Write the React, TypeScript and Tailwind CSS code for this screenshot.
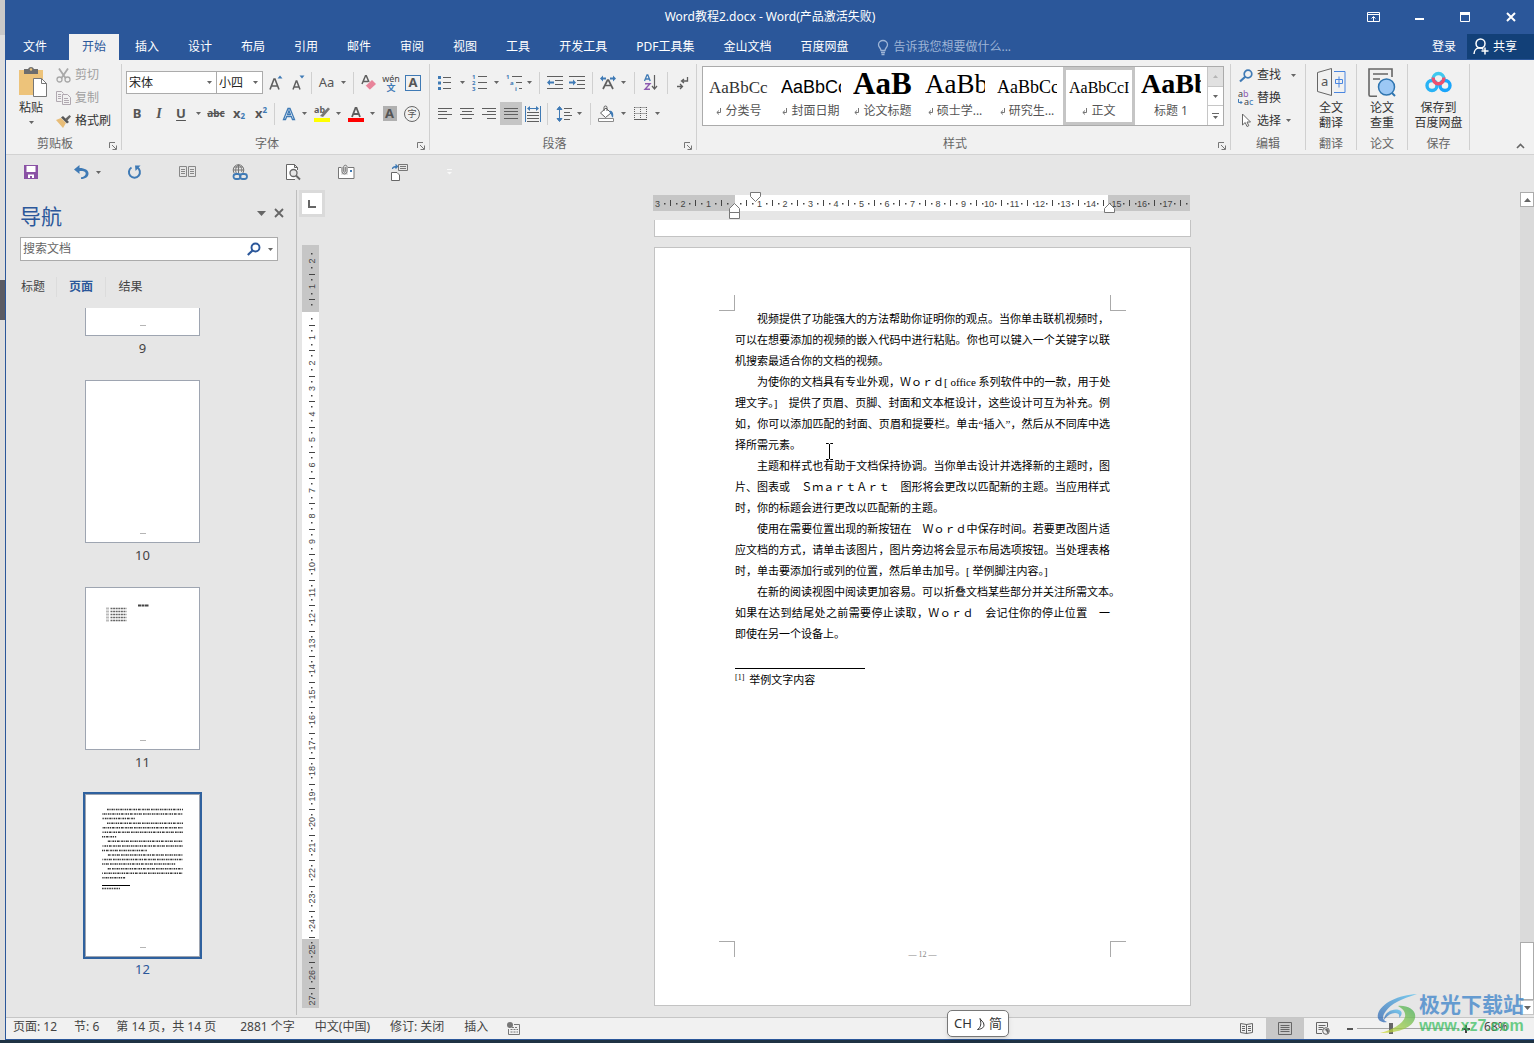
import type { ReactNode } from "react";
import clsx from "clsx";

const UI_FONT = "font-['Noto_Sans','Noto_Sans_CJK_SC',sans-serif]";
const DOC_FONT = "font-['Liberation_Serif','Noto_Sans_CJK_SC',serif]";

const BLUE = "#3f7ab5";
const GREY = "#5f5f5f";

const TABS = [
  "插入",
  "设计",
  "布局",
  "引用",
  "邮件",
  "审阅",
  "视图",
  "工具",
  "开发工具",
  "PDF工具集",
  "金山文档",
  "百度网盘",
];

interface StyleItem {
  sample: string;
  name: string;
  sampleClass: string;
  mark?: boolean;
  selected?: boolean;
}

const STYLES: StyleItem[] = [
  { sample: "AaBbCc", name: "分类号", sampleClass: "text-[17px] text-[#333]", mark: true },
  {
    sample: "AaBbCc",
    name: "封面日期",
    sampleClass: "text-[18px] font-['Liberation_Sans',sans-serif]",
    mark: true,
  },
  { sample: "AaB", name: "论文标题", sampleClass: "text-[31px] font-bold", mark: true },
  { sample: "AaBb", name: "硕士学...", sampleClass: "text-[27px]", mark: true },
  { sample: "AaBbCc", name: "研究生...", sampleClass: "text-[18px]", mark: true },
  { sample: "AaBbCcI", name: "正文", sampleClass: "text-[16px]", mark: true, selected: true },
  { sample: "AaBb", name: "标题 1", sampleClass: "text-[28px] font-bold" },
];

interface DocLine {
  text: string;
  indent?: boolean;
  full?: boolean;
}

const DOC_LINES: DocLine[] = [
  { text: "视频提供了功能强大的方法帮助你证明你的观点。当你单击联机视频时，", indent: true },
  { text: "可以在想要添加的视频的嵌入代码中进行粘贴。你也可以键入一个关键字以联", full: true },
  { text: "机搜索最适合你的文档的视频。" },
  {
    text: "为使你的文档具有专业外观，Ｗｏｒｄ[ office 系列软件中的一款，用于处",
    indent: true,
    full: true,
  },
  { text: "理文字。]　提供了页眉、页脚、封面和文本框设计，这些设计可互为补充。例", full: true },
  { text: "如，你可以添加匹配的封面、页眉和提要栏。单击“插入”，然后从不同库中选", full: true },
  { text: "择所需元素。" },
  {
    text: "主题和样式也有助于文档保持协调。当你单击设计并选择新的主题时，图",
    indent: true,
    full: true,
  },
  { text: "片、图表或　ＳｍａｒｔＡｒｔ　图形将会更改以匹配新的主题。当应用样式", full: true },
  { text: "时，你的标题会进行更改以匹配新的主题。" },
  {
    text: "使用在需要位置出现的新按钮在　Ｗｏｒｄ中保存时间。若要更改图片适",
    indent: true,
    full: true,
  },
  { text: "应文档的方式，请单击该图片，图片旁边将会显示布局选项按钮。当处理表格", full: true },
  { text: "时，单击要添加行或列的位置，然后单击加号。[ 举例脚注内容。]" },
  { text: "在新的阅读视图中阅读更加容易。可以折叠文档某些部分并关注所需文本。", indent: true },
  { text: "如果在达到结尾处之前需要停止读取，Ｗｏｒｄ　会记住你的停止位置　一", full: true },
  { text: "即使在另一个设备上。" },
];

/* ---------- small shared pieces ---------- */

interface SvgProps {
  w: number;
  h: number;
  children: ReactNode;
  className?: string;
}

function Svg({ w, h, children, className }: SvgProps) {
  return (
    <svg
      width={w}
      height={h}
      viewBox={`0 0 ${w} ${h}`}
      fill="none"
      aria-hidden="true"
      className={clsx("shrink-0 overflow-visible", className)}
    >
      {children}
    </svg>
  );
}

function Caret({ color = "#666" }: { color?: string }) {
  return (
    <Svg w={5} h={3}>
      <path d="M0 0h5L2.5 3z" fill={color} />
    </Svg>
  );
}

interface ToolProps {
  label: string;
  children: ReactNode;
  className?: string;
}

function Tool({ label, children, className = "w-[22px]" }: ToolProps) {
  return (
    <button
      type="button"
      aria-label={label}
      className={clsx("flex h-[23px] shrink-0 items-center justify-center", className)}
    >
      {children}
    </button>
  );
}

function Drop({ label, className = "w-[12px]" }: { label: string; className?: string }) {
  return (
    <Tool label={label} className={className}>
      <Caret />
    </Tool>
  );
}

function Rule({ className }: { className: string }) {
  return <span className={clsx("h-[22px] w-px shrink-0 bg-[#d0d0d0]", className)} />;
}

interface GroupProps {
  label: string;
  children: ReactNode;
  className: string;
  launcher?: boolean;
}

function Group({ label, children, className, launcher }: GroupProps) {
  return (
    <section
      aria-label={label}
      className={clsx("flex h-[86px] shrink-0 flex-col border-r border-[#d0d0d0]", className)}
    >
      <div className="h-[72px] shrink-0">{children}</div>
      <div className="flex h-4 shrink-0 items-center text-[#666]">
        <span className="flex-1 text-center leading-4">{label}</span>
        {launcher && (
          <button type="button" aria-label={`${label}设置`} className="flex w-[17px] justify-center pt-1">
            <Svg w={8} h={8}>
              <path d="M.5 6V.5H6M3 3l4 4M7.5 3.500V7.500H3.500" stroke="#777" />
            </Svg>
          </button>
        )}
      </div>
    </section>
  );
}

function Lines({ rows, x = 0 }: { rows: [number, number, number][]; x?: number }) {
  return (
    <>
      {rows.map(([y, from, to]) => (
        <path key={y} d={`M${x + from} ${y + 0.5}H${x + to}`} stroke={GREY} />
      ))}
    </>
  );
}

/* ---------- title and tabs ---------- */

function TitleBar() {
  return (
    <header className="flex h-[34px] items-center bg-[#2b579a] text-white">
      <span className="w-[184px]" />
      <h1 className="flex-1 text-center text-[12px] leading-5">Word教程2.docx - Word(产品激活失败)</h1>
      <div className="flex w-[184px] justify-end">
        <button type="button" aria-label="功能区显示选项" className="flex w-[46px] items-center justify-center">
          <Svg w={13} h={11}>
            <path d="M.5.500h12v9H.5zM.5 2.500h12M6.500 9V5M4.500 6.500l2-2 2 2" stroke="#fff" />
          </Svg>
        </button>
        <button type="button" aria-label="最小化" className="flex w-[46px] items-center justify-center">
          <Svg w={9} h={11}>
            <path d="M0 7h9" stroke="#fff" strokeWidth="2" />
          </Svg>
        </button>
        <button type="button" aria-label="最大化" className="flex w-[46px] items-center justify-center">
          <Svg w={10} h={10}>
            <path d="M.5 1v8.500h9V1" stroke="#fff" />
            <path d="M0 1.500h10" stroke="#fff" strokeWidth="3" />
          </Svg>
        </button>
        <button type="button" aria-label="关闭" className="flex w-[46px] items-center justify-center">
          <Svg w={10} h={10}>
            <path d="M1 1l8 8M9 1L1 9" stroke="#fff" strokeWidth="2" />
          </Svg>
        </button>
      </div>
    </header>
  );
}

function TabBar() {
  return (
    <nav className="flex h-[26px] items-stretch gap-[3px] bg-[#2b579a] text-white">
      <button type="button" className="mr-[2px] w-[58px]">
        文件
      </button>
      <button type="button" className="w-[50px] bg-[#f1f1f1] text-[#2b579a]">
        开始
      </button>
      {TABS.map((tab) => (
        <button key={tab} type="button" className="px-[13px] whitespace-nowrap">
          {tab}
        </button>
      ))}
      <label className="flex flex-1 items-center gap-1 pl-[13px]">
        <Svg w={12} h={15}>
          <path
            d="M4 10.500C4 8 1.500 7.500 1.500 4.800a4.500 4.300 0 0 1 9 0C10.500 7.500 8 8 8 10.500zM4 12.500h4M4.500 14.500h3"
            stroke="#9db4d6"
            strokeWidth="1.300"
          />
        </Svg>
        <input
          aria-label="告诉我您想要做什么"
          placeholder="告诉我您想要做什么..."
          className="w-full min-w-0 bg-transparent placeholder:text-[#9db4d6]"
        />
      </label>
      <button type="button" className="px-2">
        登录
      </button>
      <button type="button" className="mb-px flex w-[67px] items-center gap-1 bg-[#124078] pl-[6px]">
        <Svg w={16} h={17}>
          <circle cx="7.500" cy="5.500" r="4.500" stroke="#fff" strokeWidth="1.500" />
          <path d="M1 16c0-3.500 2.500-6 5.500-6.200 1.500 0 3 .7 4 1.700M12 9.500v7M8.500 13H15.500" stroke="#fff" strokeWidth="1.500" />
        </Svg>
        共享
      </button>
    </nav>
  );
}

/* ---------- ribbon ---------- */

function ClipboardGroup() {
  return (
    <Group label="剪贴板" launcher className="w-[116px]">
      <div className="flex">
        <button type="button" className="flex w-[50px] flex-col items-center">
          <span className="flex h-9 items-center pl-1">
            <Svg w={28} h={30}>
              <path d="M0 3h24v25H0z" fill="#edc37a" />
              <path d="M5 7V2h4a3.200 3.200 0 0 1 6 0h4v5z" fill="#6d6d6d" />
              <circle cx="12" cy="2.500" r="1.200" fill="#edc37a" />
              <path d="M14.500 11.500h8l5 5v13h-13z" fill="#fff" stroke="#777" />
              <path d="M22.500 11.500v5h5" stroke="#777" />
            </Svg>
          </span>
          <span className="leading-[15px]">粘贴</span>
          <span className="flex h-[14px] items-center">
            <Caret />
          </span>
        </button>
        <div className="flex flex-col">
          <button type="button" className="flex h-[22px] items-center gap-1 text-[#a0a0a0]">
            <Svg w={15} h={15}>
              <path d="M3 .5l6.500 9.500M12 .5L5.500 10" stroke="#a8a8a8" strokeWidth="1.800" />
              <circle cx="3.500" cy="11.500" r="2.500" stroke="#a8a8a8" strokeWidth="1.300" />
              <circle cx="11.500" cy="11.500" r="2.500" stroke="#a8a8a8" strokeWidth="1.300" />
            </Svg>
            剪切
          </button>
          <button type="button" className="flex h-[23px] items-center gap-1 text-[#a0a0a0]">
            <Svg w={15} h={14}>
              <path d="M5.500 10.500h-5V.5h5l2 2M2 3.500h3M2 5.500h3M2 7.500h3" stroke="#b0a8b0" />
              <path d="M6.500 3.500h5l3 3v7h-8zM8 7.500h4M8 9.500h5M8 11.500h5" stroke="#b0a8b0" />
            </Svg>
            复制
          </button>
          <button type="button" className="flex h-[23px] items-center gap-1 text-[#333]">
            <Svg w={15} h={14}>
              <path d="M0 6l5-2 5 5-3 5z" fill="#e8bd78" />
              <path d="M5 3.500l2-1.500 6 6-2 1.500z" fill="#555" />
              <path d="M9 5l4.500-4L15 2.500 11 7z" fill="#666" />
            </Svg>
            格式刷
          </button>
        </div>
      </div>
    </Group>
  );
}

function FontGroup() {
  return (
    <Group label="字体" launcher className="w-[308px]">
      <div className="flex flex-col gap-2 pt-[7px] pl-1">
        <div className="flex items-center">
          <label className="flex h-[23px] w-[91px] items-center border border-[#ababab] bg-white pr-1">
            <select aria-label="字体名称" className="w-full min-w-0 appearance-none pl-[2px] text-[#222]">
              <option>宋体</option>
            </select>
            <Caret />
          </label>
          <label className="-ml-px flex h-[23px] w-[47px] items-center border border-[#ababab] bg-white pr-1">
            <select aria-label="字号" className="w-full min-w-0 appearance-none pl-[2px] text-[#222]">
              <option>小四</option>
            </select>
            <Caret />
          </label>
          <Tool label="增大字号" className="ml-[2px] w-[22px]">
            <Svg w={14} h={16}>
              <path d="M1 14.500L5 4h1l4 10.500M2.500 11h6" stroke={GREY} strokeWidth="1.600" />
              <path d="M8.500 3.500L11 .5l2.500 3z" fill={BLUE} />
            </Svg>
          </Tool>
          <Tool label="减小字号">
            <Svg w={14} h={16}>
              <path d="M2 14.500L5.200 6h.6L9 14.500M3 12h5" stroke={GREY} strokeWidth="1.500" />
              <path d="M8.500.5L11 3.500l2.500-3z" fill={BLUE} />
            </Svg>
          </Tool>
          <Rule className="mx-[2px]" />
          <Tool label="更改大小写" className="w-[37px] gap-[7px] text-[13px] text-[#555]">
            Aa
            <Caret />
          </Tool>
          <Rule className="mr-[4px] ml-[2px]" />
          <Tool label="清除所有格式">
            <Svg w={16} h={16}>
              <path d="M1 9L4.500.8h.8L8 7M2 6.500h5" stroke={GREY} strokeWidth="1.500" />
              <path d="M4.500 11L11 5l4 4-6.500 6z" fill="#e8849a" />
              <path d="M4.500 11l4 4" stroke="#fff" />
            </Svg>
          </Tool>
          <Tool label="拼音指南" className="w-[22px] flex-col">
            <span className="text-[9px] leading-[9px] text-[#444]">wén</span>
            <span className="text-[9px] leading-[9px] font-bold text-[#3f7ab5]">文</span>
          </Tool>
          <Tool label="字符边框">
            <span className="flex size-4 items-center justify-center border border-[#3f7ab5] text-[13px] leading-none font-bold text-[#555]">
              A
            </span>
          </Tool>
        </div>
        <div className="flex items-center text-[13px] text-[#555]">
          <Tool label="加粗">
            <b>B</b>
          </Tool>
          <Tool label="倾斜">
            <i className="font-['Liberation_Serif',serif] text-[14px] font-bold">I</i>
          </Tool>
          <Tool label="下划线">
            <b className="underline underline-offset-2">U</b>
          </Tool>
          <Drop label="下划线样式" />
          <Tool label="删除线" className="w-[24px] text-[10px] font-bold">
            <s>abc</s>
          </Tool>
          <Tool label="下标" className="w-[22px] font-bold">
            x<sub className="text-[8px] text-[#3f7ab5]">2</sub>
          </Tool>
          <Tool label="上标" className="w-[22px] font-bold">
            x<sup className="text-[8px] text-[#3f7ab5]">2</sup>
          </Tool>
          <Rule className="mr-[4px] ml-[2px]" />
          <Tool label="文本效果" className="w-[20px]">
            <Svg w={14} h={14}>
              <path
                d="M1.500 12.500L6 1.500h2l4.500 11h-2l-1.200-3H4.700l-1.200 3zM5.500 7.500h3L7 3.500z"
                fill="#fff"
                stroke={BLUE}
                strokeWidth="1.300"
              />
            </Svg>
          </Tool>
          <Drop label="文本效果选项" className="w-[10px]" />
          <Tool label="突出显示颜色" className="ml-[2px] w-[22px]">
            <Svg w={17} h={17}>
              <text x="0" y="8" fontSize="9" fontWeight="700" fill={GREY}>
                ab
              </text>
              <path d="M6 11l8-8.500 2 1.500-7 8z" fill="#777" />
              <path d="M0 13h16v4H0z" fill="#ff0" />
            </Svg>
          </Tool>
          <Drop label="突出显示颜色选项" className="w-[10px]" />
          <Tool label="字体颜色" className="ml-[2px] w-[22px]">
            <Svg w={16} h={16}>
              <path d="M4 11L7.500 2h1L12 11M5 8h6" stroke={GREY} strokeWidth="1.800" />
              <path d="M0 12h16v4H0z" fill="#f00" />
            </Svg>
          </Tool>
          <Drop label="字体颜色选项" className="w-[11px]" />
          <Tool label="字符底纹" className="w-[23px]">
            <span className="flex h-[15px] w-[14px] items-center justify-center bg-[#b0b0b0] leading-none font-bold">
              A
            </span>
          </Tool>
          <Tool label="带圈字符">
            <span className="flex size-4 items-center justify-center rounded-full border border-[#666] text-[9px]">
              字
            </span>
          </Tool>
        </div>
      </div>
    </Group>
  );
}

function ParagraphGroup() {
  return (
    <Group label="段落" launcher className="w-[267px]">
      <div className="flex flex-col gap-2 pt-[7px] pl-1">
        <div className="flex items-center">
          <Tool label="项目符号">
            <Svg w={14} h={16}>
              <path d="M0 1h3v3H0zM0 6.500h3v3H0zM0 12h3v3H0z" fill={BLUE} />
              <Lines rows={[[2, 5, 13], [7, 5, 13], [13, 5, 13]]} />
            </Svg>
          </Tool>
          <Drop label="项目符号库" />
          <Tool label="编号">
            <Svg w={15} h={17}>
              {["1", "2", "3"].map((n, i) => (
                <text key={n} x="0" y={5 + i * 6} fontSize="6" fontWeight="700" fill={BLUE}>
                  {n}
                </text>
              ))}
              <Lines rows={[[2, 6, 15], [8, 6, 15], [14, 6, 15]]} />
            </Svg>
          </Tool>
          <Drop label="编号库" />
          <Tool label="多级列表" className="w-[24px]">
            <Svg w={17} h={17}>
              <text x="0" y="5" fontSize="6" fontWeight="700" fill={BLUE}>1</text>
              <text x="4" y="11" fontSize="6" fontWeight="700" fill={BLUE}>a</text>
              <text x="9" y="17" fontSize="6" fontWeight="700" fill={BLUE}>i</text>
              <Lines rows={[[2, 6, 16], [8, 10, 16], [14, 13, 16]]} />
            </Svg>
          </Tool>
          <Drop label="多级列表库" className="w-[6px]" />
          <Rule className="mr-[4px] ml-[7px]" />
          <Tool label="减少缩进量">
            <Svg w={16} h={14}>
              <Lines rows={[[0, 0, 16], [4, 8, 16], [8, 8, 16], [12, 0, 16]]} />
              <path d="M0 6.500l3-3v2h4v2H3v2z" fill={BLUE} />
            </Svg>
          </Tool>
          <Tool label="增加缩进量">
            <Svg w={16} h={14}>
              <Lines rows={[[0, 0, 16], [4, 8, 16], [8, 8, 16], [12, 0, 16]]} />
              <path d="M7 6.500l-3-3v2H0v2h4v2z" fill={BLUE} />
            </Svg>
          </Tool>
          <Rule className="mx-1" />
          <Tool label="中文版式">
            <Svg w={16} h={15}>
              <path d="M0 3.500L3 .5v2h3v2H3v2zM16 3.500L13 .5v2h-3v2h3v2z" fill={BLUE} />
              <path d="M3 14L7.500 5h1L13 14M5 10.500h6" stroke={GREY} strokeWidth="1.700" />
            </Svg>
          </Tool>
          <Drop label="中文版式选项" className="w-[8px]" />
          <Rule className="mr-[5px] ml-[7px]" />
          <Tool label="排序">
            <Svg w={14} h={17}>
              <path d="M.5 7L3 .8h.8L6.200 7M1.500 5h4" stroke={BLUE} strokeWidth="1.300" />
              <path d="M1 9.700h5L1 15.300h5" stroke="#8d5bb0" strokeWidth="1.400" />
              <path d="M10.500 1v14M8 12l2.500 3 2.500-3" stroke={GREY} strokeWidth="1.200" />
            </Svg>
          </Tool>
          <Rule className="mr-[4px] ml-[5px]" />
          <Tool label="显示编辑标记">
            <Svg w={12} h={14}>
              <path d="M10.500 1v4H5M7 3L4.500 5 7 7" stroke={GREY} strokeWidth="1.300" />
              <path d="M0 10.500h5M3 8l2.500 2.500L3 13" stroke={GREY} strokeWidth="1.300" />
            </Svg>
          </Tool>
        </div>
        <div className="flex items-center">
          <Tool label="左对齐">
            <Svg w={14} h={11}>
              <Lines rows={[[0, 0, 14], [3, 0, 9], [6, 0, 14], [10, 0, 9]]} />
            </Svg>
          </Tool>
          <Tool label="居中">
            <Svg w={14} h={11}>
              <Lines rows={[[0, 0, 14], [3, 2, 12], [6, 0, 14], [10, 2, 12]]} />
            </Svg>
          </Tool>
          <Tool label="右对齐">
            <Svg w={14} h={11}>
              <Lines rows={[[0, 0, 14], [3, 5, 14], [6, 0, 14], [10, 5, 14]]} />
            </Svg>
          </Tool>
          <Tool label="两端对齐" className="w-[22px] bg-[#c5c5c5]">
            <Svg w={14} h={11}>
              <Lines rows={[[0, 0, 14], [3, 0, 14], [6, 0, 14], [10, 0, 14]]} />
            </Svg>
          </Tool>
          <Tool label="分散对齐">
            <Svg w={16} h={16}>
              <path d="M.5 0v16M15.500 0v16" stroke={BLUE} />
              <path d="M2 2.500L5 0v2h6V0l3 2.500L11 5V3H5v2z" fill={BLUE} />
              <Lines rows={[[6, 2, 14], [9, 2, 14], [12, 2, 14], [15, 2, 14]]} />
            </Svg>
          </Tool>
          <Rule className="mr-[5px] ml-[3px]" />
          <Tool label="行和段落间距">
            <Svg w={15} h={16}>
              <path d="M2.500 2v12M0 3.500L2.500.5 5 3.500zM0 12.500l2.500 3 2.500-3z" stroke={BLUE} fill={BLUE} />
              <Lines rows={[[2, 7, 15], [6, 7, 13], [9, 7, 15], [13, 7, 13]]} />
            </Svg>
          </Tool>
          <Drop label="行距选项" className="w-[8px]" />
          <Rule className="mr-[4px] ml-[7px]" />
          <Tool label="底纹">
            <Svg w={17} h={16}>
              <path d="M2.500 7L8 2l5 5-5.500 4.500z" fill="#fff" stroke={GREY} />
              <path d="M6 5V1.500a1.500 1.500 0 0 1 3 0V5" stroke={GREY} />
              <path d="M11.500 4.500c3 0 4.500 3 3.500 7-2-.5-1-3-3-4z" fill={BLUE} />
              <path d="M.5 12.500h15v3H.5z" fill="#fff" stroke="#8a8a8a" />
            </Svg>
          </Tool>
          <Drop label="底纹颜色" className="w-[12px]" />
          <Tool label="边框">
            <Svg w={13} h={13}>
              <path d="M.5.500h12M.5 6.500h12M.5 0v12M6.500 0v12M12.500 0v12" stroke={GREY} strokeDasharray="1 1" />
              <path d="M0 12.500h13" stroke={GREY} />
            </Svg>
          </Tool>
          <Drop label="边框选项" className="w-[12px]" />
        </div>
      </div>
    </Group>
  );
}

function StyleGallery() {
  return (
    <Group label="样式" launcher className="w-[534px]">
      <div className="pt-[2px] pl-[5px]">
        <div className="flex h-[60px] w-[522px] border border-[#ababab] bg-white">
          {STYLES.map((item) => (
            <button
              key={item.name}
              type="button"
              aria-pressed={!!item.selected}
              className={clsx(
                "flex w-[72px] shrink-0 flex-col items-center border-[3px]",
                item.selected ? "border-[#c5c5c5]" : "border-transparent",
              )}
            >
              <span className="h-[33px] w-[60px] overflow-hidden text-left font-['Liberation_Serif',serif] text-[28px] leading-[28px] whitespace-nowrap text-black">
                <span className={item.sampleClass}>{item.sample}</span>
              </span>
              <span className="flex items-center gap-1 leading-4 whitespace-nowrap text-[#555]">
                {item.mark && (
                  <Svg w={5} h={7}>
                    <path d="M4.500 0v4.500H1M3 2.500L.8 4.500 3 6.500" stroke="#777" />
                  </Svg>
                )}
                {item.name}
              </span>
            </button>
          ))}
          <div className="flex flex-1 flex-col border-l border-[#c6c6c6]">
            <button type="button" aria-label="上一行" className="flex flex-1 items-center justify-center bg-[#e1e1e1]">
              <Svg w={5} h={3}>
                <path d="M0 3h5L2.500 0z" fill="#b5b5b5" />
              </Svg>
            </button>
            <button
              type="button"
              aria-label="下一行"
              className="flex flex-1 items-center justify-center border-y border-[#c6c6c6]"
            >
              <Caret />
            </button>
            <button type="button" aria-label="其他样式" className="flex flex-1 items-center justify-center">
              <Svg w={7} h={6}>
                <path d="M0 .5h7" stroke="#666" />
                <path d="M1 3h5L3.500 6z" fill="#666" />
              </Svg>
            </button>
          </div>
        </div>
      </div>
    </Group>
  );
}

function EditGroup() {
  return (
    <Group label="编辑" className="w-[75px]">
      <div className="flex flex-col items-start pl-2 text-[#333]">
        <button type="button" className="flex h-[22px] items-center">
          <Svg w={14} h={13} className="mr-1">
            <circle cx="9" cy="5" r="3.800" stroke={BLUE} strokeWidth="1.700" />
            <path d="M6.500 7.500L1 12.500" stroke={BLUE} strokeWidth="2.200" />
          </Svg>
          查找
          <span className="pl-[10px]">
            <Caret />
          </span>
        </button>
        <button type="button" className="-ml-px flex h-[23px] items-center">
          <Svg w={16} h={16} className="mr-[3px]">
            <text x="0" y="7" fontSize="9" fill="#444">
              a<tspan fill="#8d5bb0">b</tspan>
            </text>
            <text x="6" y="15" fontSize="9" fill="#444">
              a<tspan fill={BLUE}>c</tspan>
            </text>
            <path d="M.5 9v3.500H4M2.500 11L4 12.500 2.500 14" stroke={BLUE} />
          </Svg>
          替换
        </button>
        <button type="button" className="flex h-[23px] items-center">
          <Svg w={12} h={15} className="mr-1 ml-[2px]">
            <path d="M1.500 1v11l2.700-2.500L6 13.500l1.800-.8L6 9h3.500z" fill="#fff" stroke="#666" />
          </Svg>
          选择
          <span className="pl-[5px]">
            <Caret />
          </span>
        </button>
      </div>
    </Group>
  );
}

interface BigButtonProps {
  icon: ReactNode;
  lines: [string, string];
}

function BigButton({ icon, lines }: BigButtonProps) {
  return (
    <button type="button" className="flex w-full flex-col items-center whitespace-nowrap text-[#333]">
      <span className="flex h-9 items-center">{icon}</span>
      <span className="leading-[15px]">{lines[0]}</span>
      <span className="leading-[15px]">{lines[1]}</span>
    </button>
  );
}

function Ribbon() {
  return (
    <div className="flex h-[95px] border-b border-[#d2d2d2] bg-[#f1f1f1] pt-1">
      <ClipboardGroup />
      <FontGroup />
      <ParagraphGroup />
      <StyleGallery />
      <EditGroup />
      <Group label="翻译" className="w-[51px]">
        <BigButton
          lines={["全文", "翻译"]}
          icon={
            <Svg w={29} h={28}>
              <path d="M.5 4.500l14-4v27l-14-4z" stroke="#666" />
              <text x="4" y="18" fontSize="13" fill="#555">
                a
              </text>
              <path d="M17 3.500h11v21H17" stroke="#4a86e0" />
              <path d="M18.500 11.500h7v4h-7zM22 8.500v11" stroke="#4a86e0" />
            </Svg>
          }
        />
      </Group>
      <Group label="论文" className="w-[51px]">
        <BigButton
          lines={["论文", "查重"]}
          icon={
            <Svg w={28} h={29}>
              <path d="M9 28.300H2.500a1.500 1.500 0 0 1-1.500-1.500V1h23v8" stroke="#666" strokeWidth="1.600" />
              <path d="M5 6h15M5 11h7" stroke="#666" strokeWidth="1.600" />
              <path d="M23 24l4 4" stroke="#2f75b0" strokeWidth="2" />
              <circle cx="18.500" cy="19" r="8" fill="#9cc8f5" stroke="#2f75b0" strokeWidth="1.500" />
            </Svg>
          }
        />
      </Group>
      <Group label="保存" className="w-[62px]">
        <BigButton
          lines={["保存到", "百度网盘"]}
          icon={
            <Svg w={27} h={22}>
              <circle cx="7" cy="14.500" r="5" stroke="#29b3f5" strokeWidth="3.400" />
              <circle cx="20" cy="14.500" r="5" stroke="#1aa5fb" strokeWidth="3.400" />
              <path d="M8 8a5.500 5.500 0 0 1 11 0" stroke="#3fc8ee" strokeWidth="3.400" />
              <path d="M8.300 6.500a5.300 5.300 0 1 0 10.400 0" stroke="#f0506e" strokeWidth="3.400" />
            </Svg>
          }
        />
      </Group>
      <div className="flex flex-1 items-end justify-end pr-2 pb-1">
        <button type="button" aria-label="折叠功能区" className="p-[1px]">
          <Svg w={9} h={6}>
            <path d="M1 5l3.500-3.500L8 5" stroke="#666" strokeWidth="1.600" />
          </Svg>
        </button>
      </div>
    </div>
  );
}

function QuickBar() {
  return (
    <div className="flex h-[35px] items-center bg-[#e6e6e6] pb-px pl-[11px]">
      <Tool label="保存" className="w-[28px]">
        <Svg w={14} h={14}>
          <path d="M0 0h14v14H0z" fill="#8a52a5" />
          <path d="M2.500 1h9v6h-9zM4 9.500h6V13H8v-2H6v2H4z" fill="#fff" />
        </Svg>
      </Tool>
      <Tool label="撤消" className="ml-[22px] w-[28px]">
        <Svg w={15} h={14}>
          <path d="M5.500 0L0 4.500 5.500 9V6C10 5.500 12.500 7 11.500 9.500 11 11 9.500 12 7 12.200V14c4.500 0 7.500-2.300 7.500-5.500S11 3 5.500 3z" fill={BLUE} />
        </Svg>
      </Tool>
      <Drop label="撤消历史" className="w-[6px]" />
      <Tool label="重复" className="ml-[19px] w-[28px]">
        <Svg w={14} h={14}>
          <path d="M4.500 2.500A5.500 5.500 0 1 0 10 2.300" stroke={BLUE} strokeWidth="2" />
          <path d="M8 .5h5.500L8.500 6z" fill={BLUE} />
        </Svg>
      </Tool>
      <Tool label="阅读视图" className="ml-[25px] w-[28px]">
        <Svg w={17} h={12}>
          <path d="M.5.500h7v10h-7zM9.500.500h7v10h-7z" stroke="#888" />
          <path d="M2 3.500h4M2 5.500h4M2 7.500h4M11 3.500h4M11 5.500h4M11 7.500h4" stroke="#888" />
        </Svg>
      </Tool>
      <Tool label="超链接" className="ml-[25px] w-[28px]">
        <Svg w={16} h={17}>
          <circle cx="6.500" cy="6" r="5.300" stroke="#777" />
          <path d="M1 6h11M2 3h9M6.500 1v9M6.500.700C3 3 3 8 5 10M6.500.700C10 3 10 6 9.500 8" stroke="#777" />
          <path d="M1 9h15v7H1z" fill="#e6e6e6" />
          <rect x="1.500" y="10" width="7" height="5" rx="2.500" stroke={BLUE} strokeWidth="1.800" />
          <rect x="8" y="10" width="7" height="5" rx="2.500" stroke={BLUE} strokeWidth="1.800" />
        </Svg>
      </Tool>
      <Tool label="打印预览" className="ml-[25px] w-[28px]">
        <Svg w={15} h={16}>
          <path d="M9 15.500H.5V.5h8l3 3V6M8.500.5v3h3" fill="#fff" stroke="#666" />
          <circle cx="7.500" cy="9" r="3.500" fill="#e6e6e6" stroke="#666" strokeWidth="1.300" />
          <path d="M10 11.500l4 4" stroke="#666" strokeWidth="1.800" />
        </Svg>
      </Tool>
      <Tool label="邮件附件" className="ml-[25px] w-[28px]">
        <Svg w={17} h={16}>
          <path d="M.5 3.500h15.500v11H.5z" fill="#fff" stroke="#777" />
          <path d="M3 0h7v11H3z" fill="#e6e6e6" />
          <path d="M4 3v4.500a2.500 2.500 0 0 0 5 0V2.500a1.700 1.700 0 0 0-3.300 0V7.500a.8.8 0 0 0 1.600 0V3" stroke="#777" />
          <path d="M12 6h2v2h-2z" fill={BLUE} />
        </Svg>
      </Tool>
      <Tool label="插入对象" className="ml-[25px] w-[28px]">
        <Svg w={17} h={17}>
          <path d="M7.500.5h9v6h-9zM9 2.500h6M9 4.500h6" stroke="#777" />
          <path d="M6 16.500H.5v-8H6l2.500 2.500v5.500z" fill="#fff" stroke="#666" />
          <path d="M1.500 5C1.500 3 3 2.500 6 2.500M4.500.5l2 2-2 2" stroke={BLUE} strokeWidth="1.300" />
        </Svg>
      </Tool>
      <Tool label="自定义快速访问工具栏" className="ml-[22px] w-[28px]">
        <Svg w={5} h={6}>
          <path d="M0 .5h5" stroke="#fafafa" />
          <path d="M0 3h5L2.500 5.500z" fill="#fafafa" />
        </Svg>
      </Tool>
    </div>
  );
}

/* ---------- navigation pane ---------- */

function ThumbNine() {
  return (
    <div className="flex h-7 w-[115px] flex-col items-center justify-end border border-t-0 border-[#9ea5b1] bg-white pb-[9px]">
      <span className="h-px w-[6px] bg-[#b5b5b5]" />
    </div>
  );
}

function ThumbTen() {
  return (
    <Svg w={113} h={161}>
      <path d="M54 152.500h6" stroke="#b5b5b5" />
    </Svg>
  );
}

function ThumbEleven() {
  return (
    <Svg w={113} h={161}>
      <path d="M52 17.500h11" stroke="#444" strokeWidth="2" strokeDasharray="3 .5" />
      {[20.5, 23.5, 26.5, 29.5, 32.5].map((y) => (
        <g key={y}>
          <path d={`M20 ${y}h3`} stroke="#bbb" strokeWidth="2" />
          <path d={`M24.500 ${y}h16`} stroke="#666" strokeWidth="1.500" strokeDasharray="2 .6" />
        </g>
      ))}
      <path d="M54 152.500h6" stroke="#b5b5b5" />
    </Svg>
  );
}

function ThumbTwelve() {
  return (
    <Svg w={113} h={161}>
      {DOC_LINES.map((line, i) => {
        const from = line.indent ? 21 : 16;
        const to = line.full || line.indent ? 97 : 16 + line.text.length * 2.36;
        return (
          <path
            key={line.text}
            d={`M${from} ${14.5 + i * 4.55}H${to}`}
            stroke="#333"
            strokeWidth="1.500"
            strokeDasharray="1.700 .7 1.200 .9 2 .5 .8 1"
            strokeDashoffset={i * 3}
          />
        );
      })}
      <path d="M16 90.500h28" stroke="#000" />
      <path d="M16 93.500h18" stroke="#444" strokeWidth="1.500" strokeDasharray="1.700 .7" />
      <path d="M54 152.500h6" stroke="#b5b5b5" />
    </Svg>
  );
}

interface ThumbProps {
  page: number;
  selected?: boolean;
  children: ReactNode;
}

function Thumb({ page, selected, children }: ThumbProps) {
  return (
    <button type="button" aria-current={selected ? "page" : undefined} className="flex flex-col items-center">
      <span
        className={clsx(
          "block border border-[#9ea5b1] bg-white",
          selected && "outline-2 outline-[#2f619e]",
        )}
      >
        {children}
      </span>
      <span className={clsx("pt-[3px] text-[13px] leading-[18px]", selected ? "text-[#2b579a]" : "text-[#444]")}>
        {page}
      </span>
    </button>
  );
}

function NavPane() {
  return (
    <aside className="mb-[2px] flex w-[291px] shrink-0 flex-col overflow-hidden border-r border-[#bdbdbd] pt-3 pl-[14px]">
      <div className="flex h-7 items-center pr-3">
        <h2 className="flex-1 text-[21px] leading-7 text-[#2b579a]">导航</h2>
        <button type="button" aria-label="任务窗格选项" className="mr-2 pb-[6px]">
          <Svg w={9} h={5}>
            <path d="M0 0h9L4.500 5z" fill="#666" />
          </Svg>
        </button>
        <button type="button" aria-label="关闭导航" className="pb-[6px]">
          <Svg w={10} h={10}>
            <path d="M1 1l8 8M9 1L1 9" stroke="#666" strokeWidth="1.800" />
          </Svg>
        </button>
      </div>
      <div className="mt-[7px] flex h-6 w-[258px] items-center border border-[#ababab] bg-white px-1">
        <input
          aria-label="搜索文档"
          placeholder="搜索文档"
          className="-ml-[2px] min-w-0 flex-1 bg-transparent placeholder:text-[#666]"
        />
        <button type="button" aria-label="搜索" className="mr-[7px]">
          <Svg w={14} h={14}>
            <circle cx="8.500" cy="5.500" r="4" stroke="#2b579a" strokeWidth="1.900" />
            <path d="M5.500 8.500L.8 13" stroke="#2b579a" strokeWidth="2.200" />
          </Svg>
        </button>
        <Caret />
      </div>
      <div className="mt-4 flex h-5 text-[#444]">
        <button type="button" className="w-[37px] border-r border-[#dcdcdc] pr-[10px] whitespace-nowrap">
          标题
        </button>
        <button
          type="button"
          className="w-[49px] border-r border-[#dcdcdc] font-bold whitespace-nowrap text-[#2b579a]"
        >
          页面
        </button>
        <button type="button" className="w-[49px] whitespace-nowrap">
          结果
        </button>
      </div>
      <div className="mt-[11px] flex flex-col items-center gap-[23px] pr-[31px]">
        <button type="button" className="flex flex-col items-center">
          <ThumbNine />
          <span className="pt-[3px] text-[13px] leading-[18px] text-[#444]">9</span>
        </button>
        <Thumb page={10}>
          <ThumbTen />
        </Thumb>
        <Thumb page={11}>
          <ThumbEleven />
        </Thumb>
        <Thumb page={12} selected>
          <ThumbTwelve />
        </Thumb>
      </div>
    </aside>
  );
}

/* ---------- rulers and page ---------- */

const UNIT = 25.5;

function range(from: number, to: number) {
  return Array.from({ length: to - from + 1 }, (_, i) => from + i);
}

function HorizontalRuler() {
  const zero = 80;
  return (
    <svg width="537" height="30" viewBox="0 0 537 30" className="overflow-visible" role="img" aria-label="水平标尺">
      <path d="M-1 5h537v16H-1z" fill="#c6c6c6" />
      <path d="M81 5h373v16H81z" fill="#fff" />
      {range(-3, 17).map((n) => {
        const x = zero + n * UNIT;
        return (
          <g key={n} fill="#444">
            {n !== 0 && (
              <text x={x} y="17" textAnchor="middle" fontSize="9" className="font-['Liberation_Sans',sans-serif]">
                {Math.abs(n)}
              </text>
            )}
            <path d={`M${Math.round(x + 6)} 13h1.500v1.500h-1.500zM${Math.round(x + 12)} 10h1v6h-1z`} />
            <path d={`M${Math.round(x + 18)} 13h1.500v1.500h-1.500z`} />
          </g>
        );
      })}
      <g fill="#fff" stroke="#777">
        <path d="M96.500 2.500h10v4l-5 5-5-5z" />
        <path d="M75.500 22.500v-4l5-5 5 5v4zM75.500 22.500h10v6h-10z" />
        <path d="M450.500 22.500v-4l5-5 5 5v4z" />
      </g>
    </svg>
  );
}

function VerticalRuler() {
  return (
    <svg width="17" height="763" viewBox="0 0 17 763" role="img" aria-label="垂直标尺">
      <path d="M0 0h17v763H0z" fill="#c6c6c6" />
      <path d="M0 67h17v627H0z" fill="#fff" />
      {range(-2, 27).map((n) => {
        const y = 67 + n * UNIT;
        return (
          <g key={n} fill="#444">
            {n !== 0 && (
              <text
                x="0"
                y="0"
                transform={`translate(12.500 ${y}) rotate(-90)`}
                textAnchor="middle"
                fontSize="9"
                className="font-['Liberation_Sans',sans-serif]"
              >
                {Math.abs(n)}
              </text>
            )}
            <path d={`M9 ${Math.round(y - 8)}h1.500v1.500H9z`} />
            {n !== 27 && <path d={`M9 ${Math.round(y + 6)}h1.500v1.500H9z`} />}
            {n !== -2 && <path d={`M7 ${Math.round(y - 13)}h6v1H7z`} />}
          </g>
        );
      })}
    </svg>
  );
}

function DocumentPage() {
  return (
    <article
      className={clsx(
        "relative flex h-[759px] w-[537px] flex-col border border-[#c3c3c3] bg-white text-[11px] text-black",
        DOC_FONT,
      )}
    >
      <div className="flex justify-between px-16 pt-[47px]">
        <span className="size-4 border-r border-b border-[#aaa]" />
        <span className="size-4 border-b border-l border-[#aaa]" />
      </div>
      <div className="-mt-[2px] px-20">
        {DOC_LINES.map((line) => (
          <p
            key={line.text}
            className={clsx(
              "leading-[21px] whitespace-nowrap",
              line.indent && "pl-[22px]",
              line.full && "[text-align-last:justify]",
            )}
          >
            {line.text}
          </p>
        ))}
      </div>
      <div className="mt-[23px] px-20">
        <hr className="w-[130px] border-black" />
        <p className="pt-px leading-[21px]">
          <sup className="mr-[5px] text-[8px]">[1]</sup>举例文字内容
        </p>
      </div>
      <div className="mt-auto flex items-end justify-between px-16 pb-12">
        <span className="size-4 border-t border-r border-[#aaa]" />
        <span className="h-2 text-[8px] leading-3 text-[#888]">— 12 —</span>
        <span className="size-4 border-t border-l border-[#aaa]" />
      </div>
      <Svg w={7} h={17} className="absolute top-[195px] left-[171px]">
        <path d="M0 .5h2.500l1 1 1-1H7M0 16.500h2.500l1-1 1 1H7M3.500 1v15" stroke="#000" />
      </Svg>
    </article>
  );
}

function ScrollBar() {
  return (
    <div className="mt-[2px] mb-[2px] flex w-[14px] shrink-0 flex-col bg-[#dadada]">
      <button
        type="button"
        aria-label="向上滚动"
        className="flex h-[15px] items-center justify-center border border-[#ababab] bg-white"
      >
        <Svg w={7} h={4}>
          <path d="M0 4h7L3.500 0z" fill="#666" />
        </Svg>
      </button>
      <div className="flex-1" />
      <div className="h-[58px] border border-[#ababab] bg-white" />
      <button
        type="button"
        aria-label="向下滚动"
        className="flex h-[15px] items-center justify-center border border-[#c6c6c6] bg-white"
      >
        <Svg w={7} h={4}>
          <path d="M0 0h7L3.500 4z" fill="#666" />
        </Svg>
      </button>
    </div>
  );
}

function Workspace() {
  return (
    <main className="flex flex-1 bg-[#e6e6e6]">
      <NavPane />
      <div className="flex w-7 shrink-0 flex-col items-start pl-[2px]">
        <button
          type="button"
          aria-label="制表符"
          className="flex h-[27px] w-[26px] items-center justify-center border-[3px] border-[#dadada] bg-white"
        >
          <Svg w={8} h={8}>
            <path d="M1 0v7h7" stroke="#666" strokeWidth="2" />
          </Svg>
        </button>
        <div className="pt-7 pl-[3px]">
          <VerticalRuler />
        </div>
      </div>
      <div className="flex flex-1 flex-col items-center">
        <HorizontalRuler />
        <div className="mb-[10px] h-[17px] w-[537px] border border-t-0 border-[#c3c3c3] bg-white" />
        <DocumentPage />
      </div>
      <ScrollBar />
    </main>
  );
}

/* ---------- status bar ---------- */

function StatusBar() {
  return (
    <footer className="flex h-[22px] items-center border-t border-[#c6c6c6] bg-[#f1f1f1] text-[#444]">
      <div className="flex flex-1 items-center gap-6 pb-[3px] pl-[7px] whitespace-nowrap">
        <div className="flex gap-[17px]">
          <span>页面: 12</span>
          <span>节: 6</span>
          <span>第 14 页，共 14 页</span>
        </div>
        <div className="flex gap-5">
          <span>2881 个字</span>
          <span>中文(中国)</span>
          <span>修订: 关闭</span>
          <span>插入</span>
        </div>
        <button type="button" aria-label="宏录制" className="-ml-[5px] pt-[2px]">
          <Svg w={13} h={13}>
            <circle cx="3" cy="3" r="3" fill="#777" />
            <path d="M7 2.500h5.500v10h-11V7" stroke="#777" />
            <path d="M5 5.500h6M3.500 7.500H11M3.500 10h7.500" stroke="#777" strokeDasharray="2 1" />
          </Svg>
        </button>
      </div>
      <button type="button" aria-label="阅读视图" className="flex w-[39px] justify-center">
        <Svg w={13} h={13}>
          <path d="M.5 1.500l6 1 6-1v9l-6 1-6-1zM6.500 2v10" stroke="#666" />
          <path d="M2 4.500h3M2 6.500h3M2 8.500h3M8 4.500h3M8 6.500h3M8 8.500h3" stroke="#666" />
        </Svg>
      </button>
      <button type="button" aria-label="页面视图" className="flex h-full w-[38px] items-center justify-center bg-[#c8c8c8]">
        <Svg w={14} h={13}>
          <path d="M.5.500h13v12H.5zM2.500 3.500h9M2.500 5.500h9M2.500 7.500h9M2.500 9.500h9" stroke="#666" />
        </Svg>
      </button>
      <button type="button" aria-label="Web 版式视图" className="flex w-[38px] justify-center">
        <Svg w={14} h={13}>
          <path d="M6 11.500H.5V.5h11V5M2.500 3.500h7M2.500 5.500h5M2.500 7.500h4" stroke="#666" />
          <circle cx="10" cy="9" r="3.300" fill="#f1f1f1" stroke="#666" />
          <path d="M8 8l2 .5 1.500 3L13 9l-2-2.500z" fill="#666" />
        </Svg>
      </button>
      <button type="button" aria-label="缩小" className="flex w-[15px] justify-center">
        <Svg w={6} h={2}>
          <path d="M0 0h6v2H0z" fill="#555" />
        </Svg>
      </button>
      <input
        type="range"
        aria-label="缩放"
        defaultValue={33}
        className="h-[14px] w-[102px] appearance-none bg-[linear-gradient(#a5a5a5,#a5a5a5)] bg-[length:100%_1px] bg-center bg-no-repeat [&::-webkit-slider-thumb]:h-[11px] [&::-webkit-slider-thumb]:w-[4px] [&::-webkit-slider-thumb]:appearance-none [&::-webkit-slider-thumb]:bg-[#666]"
      />
      <button type="button" aria-label="放大" className="flex w-[13px] justify-center">
        <Svg w={8} h={8}>
          <path d="M4 0v8M0 4h8" stroke="#444" strokeWidth="2" />
        </Svg>
      </button>
      <span className="w-[62px] pb-[3px] pl-3">68%</span>
    </footer>
  );
}

function Watermark() {
  return (
    <div className="pointer-events-none absolute right-[10px] bottom-[7px] flex items-center opacity-75">
      <svg width="42" height="42" viewBox="0 0 42 42" aria-hidden="true">
        <defs>
          <linearGradient id="sky" x1="0" y1="1" x2="1" y2="0">
            <stop offset="0" stopColor="#2f63b0" />
            <stop offset="1" stopColor="#55c3f2" />
          </linearGradient>
          <linearGradient id="leaf" x1="0" y1="1" x2="1" y2="0">
            <stop offset="0" stopColor="#d8dc3c" />
            <stop offset="1" stopColor="#3fae5a" />
          </linearGradient>
        </defs>
        <path d="M40 1C22 2 4 10 1 21c-1.500 6 3 9 9 8-5-2-5-6-1-11C14 11 24 6 40 1z" fill="url(#sky)" />
        <path d="M7 27c0-7 8-12 15-10 3 1 4 4 0 8 1-4-1-5-4-5-5 0-9 4-11 7z" fill="url(#sky)" />
        <path d="M21 13c9-1 19 4 17 12-2 9-15 15-35 15 12-3 23-9 25-16 1-5-2-8-7-11z" fill="url(#leaf)" />
      </svg>
      <div className="flex flex-col items-center">
        <span className="text-[21px] leading-[24px] font-bold text-[#3b82c9]">极光下载站</span>
        <span className="font-['Liberation_Sans',sans-serif] text-[16px] leading-[20px] font-bold text-[#3fbf63]">
          www.xz7.com
        </span>
      </div>
    </div>
  );
}

export default function App() {
  return (
    <div className={clsx("relative flex min-h-screen flex-col bg-[#1f3344] text-[12px] text-[#333]", UI_FONT)}>
      <div className="flex flex-1">
        <div className="flex w-[5px] shrink-0 flex-col bg-[#dedede]">
          <span className="h-[35px] bg-[#c9c9c9]" />
          <span className="h-[245px]" />
          <span className="h-10 bg-[#5b5b63]" />
        </div>
        <div className="flex min-w-0 flex-1 flex-col border-b border-l border-[#2b579a]">
          <TitleBar />
          <TabBar />
          <Ribbon />
          <QuickBar />
          <Workspace />
          <StatusBar />
        </div>
      </div>
      <div className="h-[3px]" />
      <div className="absolute bottom-[6px] left-[947px] flex h-[27px] w-[62px] items-center justify-center gap-1 rounded-[5px] border border-[#777] bg-white text-[13px] shadow-md">
        CH
        <Svg w={9} h={12}>
          <path d="M4 .5c.5 2 4 3 4 6.500 0 2-1.500 4-6.500 4.500C5 9 5.500 6 4 .5z" stroke="#333" />
        </Svg>
        简
      </div>
      <Watermark />
    </div>
  );
}
